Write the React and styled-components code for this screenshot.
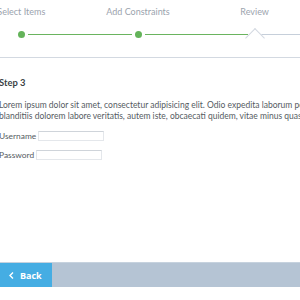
import React from "react";
import styled, { createGlobalStyle } from "styled-components";

const Global = createGlobalStyle`
  html, body { margin: 0; padding: 0; background: #fff; overflow: hidden; }
  body { font-family: Lato, "Open Sans", Arial, sans-serif; }
  * { box-sizing: border-box; }
`;

const Page = styled.div`
  width: 300px;
  height: 300px;
  display: flex;
  flex-direction: column;
  overflow: hidden;
`;

const Wizard = styled.div`
  width: 350px;
  margin-left: -37px;
  flex: 1;
`;

const StepsHeader = styled.div`
  position: relative;
  display: grid;
  grid-template-columns: repeat(3, 1fr);
  padding: 6px 0 19px;
  border-bottom: 1px solid #d3d9e1;
`;

const Step = styled.div`
  position: relative;
  display: flex;
  flex-direction: column;
  align-items: center;
`;

const StepLabel = styled.div`
  font-size: 9px;
  line-height: 12px;
  color: #9ba3ad;
  white-space: nowrap;
`;

const Track = styled.div`
  width: 100%;
  margin-top: 13px;
  display: flex;
  align-items: center;
  gap: 3px;
  height: 7px;
`;

const Line = styled.div`
  flex: 1;
  height: 1px;
  background: ${(p) => p.$color};
`;

const Dot = styled.div`
  width: 7px;
  height: 7px;
  border-radius: 50%;
  background: #64b35a;
  flex: none;
`;

const Notch = styled.div`
  position: absolute;
  bottom: -7px;
  left: 50%;
  width: 14px;
  height: 14px;
  margin-left: -7px;
  background: #fff;
  border-top: 1px solid #d3d9e1;
  border-left: 1px solid #d3d9e1;
  transform: rotate(45deg);
`;

const Content = styled.div`
  padding: 19px 36px 0;
  color: #555b62;
`;

const Heading = styled.h3`
  margin: 0;
  font-size: 9.4px;
  line-height: 12px;
  font-weight: 700;
  color: #3a3f45;
`;

const Paragraph = styled.p`
  margin: 11px 0 0;
  font-size: 8.5px;
  line-height: 11px;
  white-space: nowrap;
`;

const FieldRow = styled.div`
  display: flex;
  align-items: center;
  gap: 2px;
  height: 12px;
  margin-top: ${(p) => p.$gap}px;
  font-size: 8.4px;
`;

const Input = styled.input`
  width: 66px;
  height: 10px;
  padding: 0;
  border: 1px solid #e4e7eb;
  border-top-color: #cfd4da;
  outline: none;
  background: #fff;
`;

const Footer = styled.div`
  display: flex;
  height: 25px;
  margin-bottom: 13px;
  background: #b5c4d4;
  border-top: 1px solid #c6d2de;
`;

const BackButton = styled.button`
  width: 52px;
  height: 100%;
  border: none;
  margin: 0;
  padding: 0 0 0 9px;
  background: #45ade3;
  color: #fff;
  font-family: "Open Sans", Arial, sans-serif;
  font-size: 9px;
  font-weight: 700;
  display: flex;
  align-items: center;
  gap: 6px;
`;

const steps = [
  { label: "Select Items", left: "transparent", right: "#6ab45f" },
  { label: "Add Constraints", left: "#6ab45f", right: "#6ab45f" },
  { label: "Review", left: "#6ab45f", right: "#c6cfda", active: true },
];

export default function App() {
  return (
    <Page>
      <Global />
      <Wizard>
        <StepsHeader>
          {steps.map((s) => (
            <Step key={s.label}>
              <StepLabel>{s.label}</StepLabel>
              <Track>
                <Line $color={s.left} />
                <Dot />
                <Line $color={s.right} />
              </Track>
              {s.active && <Notch />}
            </Step>
          ))}
        </StepsHeader>
        <Content>
          <Heading>Step 3</Heading>
          <Paragraph>
            Lorem ipsum dolor sit amet, consectetur adipisicing elit. Odio expedita laborum possimus
            <br />
            blanditiis dolorem labore veritatis, autem iste, obcaecati quidem, vitae minus quas
          </Paragraph>
          <FieldRow $gap={8}>
            <span>Username</span>
            <Input type="text" />
          </FieldRow>
          <FieldRow $gap={7}>
            <span>Password</span>
            <Input type="password" />
          </FieldRow>
        </Content>
      </Wizard>
      <Footer>
        <BackButton>
          <svg width="5" height="7" viewBox="0 0 5 7">
            <path d="M4 0.5 L1 3.5 L4 6.5" fill="none" stroke="#fff" strokeWidth="1.4" />
          </svg>
          Back
        </BackButton>
      </Footer>
    </Page>
  );
}
